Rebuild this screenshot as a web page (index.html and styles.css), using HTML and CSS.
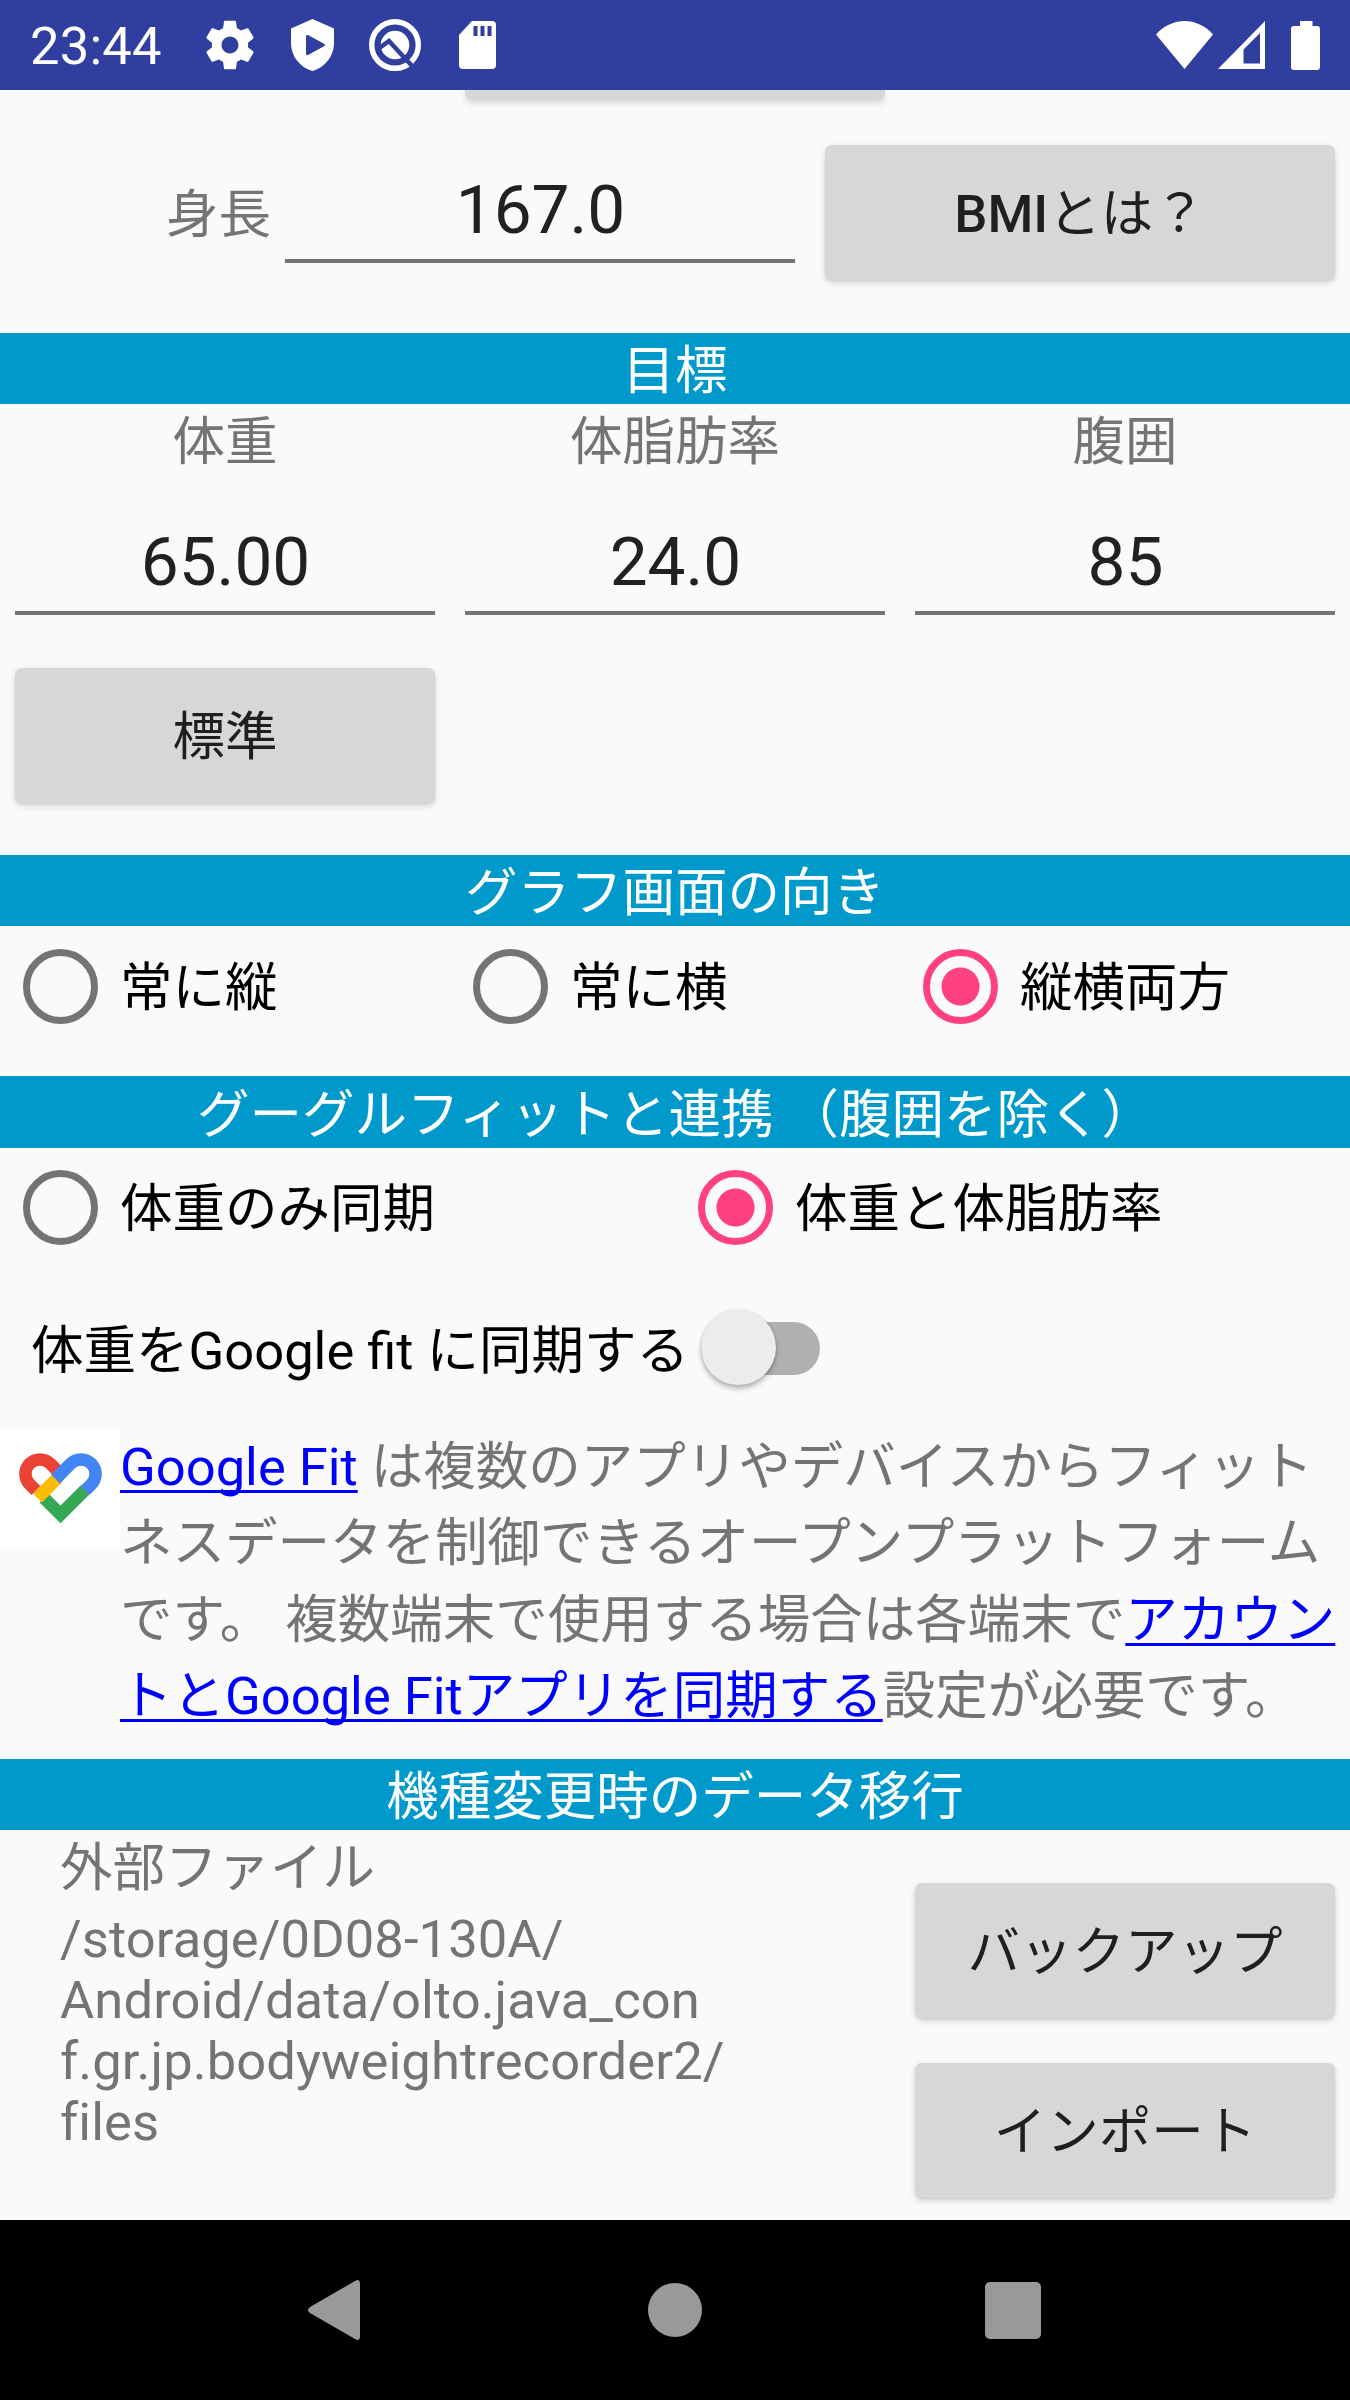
FILE: index.html
```
<!DOCTYPE html>
<html lang="ja">
  <head>
    <meta charset="utf-8">
    <title>設定</title>
    <link rel="stylesheet" href="styles.css">
  </head>
  <body>
    <div id="statusbar">
      <span class="clock">23:44</span>
      <svg class="gear" viewBox="0 0 24 24"><path d="M19.43 12.98c.04-.32.07-.64.07-.98s-.03-.66-.07-.98l2.11-1.65c.19-.15.24-.42.12-.64l-2-3.46c-.12-.22-.39-.3-.61-.22l-2.49 1c-.52-.4-1.08-.73-1.69-.98l-.38-2.65C14.46 2.18 14.25 2 14 2h-4c-.25 0-.46.18-.49.42l-.38 2.65c-.61.25-1.17.59-1.69.98l-2.49-1c-.23-.09-.49 0-.61.22l-2 3.46c-.13.22-.07.49.12.64l2.11 1.65c-.04.32-.07.65-.07.98s.03.66.07.98l-2.11 1.65c-.19.15-.24.42-.12.64l2 3.46c.12.22.39.3.61.22l2.49-1c.52.4 1.08.73 1.69.98l.38 2.65c.03.24.24.42.49.42h4c.25 0 .46-.18.49-.42l.38-2.65c.61-.25 1.17-.59 1.69-.98l2.49 1c.23.09.49 0 .61-.22l2-3.46c.12-.22.07-.49-.12-.64l-2.11-1.65zM12 15.5c-1.93 0-3.5-1.57-3.5-3.5s1.57-3.5 3.5-3.5 3.5 1.57 3.5 3.5-1.57 3.5-3.5 3.5z"/></svg>
      <svg class="shield" viewBox="0 0 43 52"><path fill-rule="evenodd" d="M21.500 0L43 9.500V24C43 37 34 48.500 21.500 52C9 48.500 0 37 0 24V9.500ZM15 17V35Q15 36.500 17 36L33.500 27Q34.500 26 33.500 25L17 16Q15 15.500 15 17Z"/></svg>
      <svg class="quick" viewBox="0 0 52 52">
        <circle cx="26" cy="26" r="23.300" fill="none" stroke="#fff" stroke-width="5.400"/>
        <circle cx="26" cy="26" r="14.300"/>
        <path d="M9 30L20 22L44 48" fill="none" stroke="#303f9f" stroke-width="4.600"/>
      </svg>
      <svg class="sdcard" viewBox="0 0 37 48"><path d="M13 0H33Q37 0 37 4V44Q37 48 33 48H4Q0 48 0 44V14Z"/><path fill="#303f9f" d="M14.500 5h4v10h-4zM21.500 5h4v10h-4zM28.500 5h4v10h-4z"/></svg>
      <div class="right">
        <svg class="wifi" viewBox="0 0 57 48"><path d="M0 13.500C16 -4.500 41 -4.500 57 13.500L28.500 48Z"/></svg>
        <svg class="signal" viewBox="0 0 47 48"><path fill-rule="evenodd" d="M47 0V48H0ZM42 12L25.500 28.500V42.500H42Z"/></svg>
        <svg class="battery" viewBox="0 0 29 49"><path d="M9 0H21.500V5H26Q29 5 29 8V46Q29 49 26 49H3Q0 49 0 46V8Q0 5 3 5H9Z"/></svg>
      </div>
    </div>

    <div id="content">
      <div class="peek"></div>
      <div class="height-row">
        <label>身長</label>
        <div class="field">167.0</div>
        <button><b>BMI</b>とは？</button>
      </div>

      <h2>目標</h2>
      <div class="grid">
        <div class="label">体重</div>
        <div class="label">体脂肪率</div>
        <div class="label">腹囲</div>
        <div class="field">65.00</div>
        <div class="field">24.0</div>
        <div class="field">85</div>
        <button>標準</button>
      </div>

      <h2>グラフ画面の向き</h2>
      <div class="radios">
        <div class="radio"><i></i><span>常に縦</span></div>
        <div class="radio"><i></i><span>常に横</span></div>
        <div class="radio on"><i></i><span>縦横両方</span></div>
      </div>

      <h2 class="tall">グーグルフィットと連携 （腹囲を除く）</h2>
      <div class="radios fit">
        <div class="radio"><i></i><span>体重のみ同期</span></div>
        <div class="radio on"><i></i><span>体重と体脂肪率</span></div>
      </div>
      <div class="sync">
        <span>体重をGoogle fit に同期する</span>
        <div class="switch"></div>
      </div>
      <div class="about">
        <svg class="heart" viewBox="0 0 120 120" fill="none" stroke-width="12.500">
          <path stroke="#34a853" d="M44 69L60.500 85.500L85 61"/>
          <path stroke="#ea4335" d="M36 61.500L29.700 55.300A14.500 14.500 0 0 1 50.300 34.700L57 41.500"/>
          <path stroke="#fbbc04" d="M37.500 69L58.500 48"/>
          <path stroke="#4285f4" d="M55.500 50L70.700 34.700A14.500 14.500 0 0 1 91.300 55.300L85 61.500"/>
        </svg>
        <p><a href="#">Google Fit</a> は複数のアプリやデバイスからフィット<br>ネスデータを制御できるオープンプラットフォーム<br>です。 複数端末で使用する場合は各端末で<a href="#">アカウン<br>トとGoogle Fitアプリを同期する</a>設定が必要です。</p>
      </div>

      <h2>機種変更時のデータ移行</h2>
      <div class="transfer">
        <div class="files">
          <div class="label">外部ファイル</div>
          <p>/storage/0D08-130A/<br>Android/data/olto.java_con<br>f.gr.jp.bodyweightrecorder2/<br>files</p>
        </div>
        <div class="buttons">
          <button>バックアップ</button>
          <button>インポート</button>
        </div>
      </div>
    </div>

    <div id="navbar">
      <svg class="back" viewBox="0 0 52 60"><path d="M47 1Q52 -2 52 4V56Q52 62 47 59L2 33Q-2 30 2 27Z"/></svg>
      <svg class="home" viewBox="0 0 54 54"><circle cx="27" cy="27" r="27"/></svg>
      <svg class="recent" viewBox="0 0 56 57"><rect width="56" height="57" rx="5"/></svg>
    </div>
  </body>
</html>
```

FILE: styles.css
```
* {
  margin: 0;
  padding: 0;
  box-sizing: border-box;
}
body {
  width: 1350px;
  height: 2400px;
  overflow: hidden;
  background: #fafafa;
  color: #747474;
  font-family: Roboto, "Noto Sans CJK JP", sans-serif;
  font-size: 52.5px;
  line-height: 64px;
  white-space: nowrap;
}
svg {
  display: block;
  flex: none;
}

#statusbar {
  display: flex;
  align-items: center;
  height: 90px;
  padding: 0 30px;
  background: #303f9f;
  color: #fff;
  fill: #fff;
}
#statusbar .clock {
  width: 171px;
  padding-top: 2px;
  letter-spacing: 0.2px;
}
.gear {
  width: 58px;
  height: 58px;
}
.shield {
  width: 43px;
  height: 52px;
  margin-left: 32px;
}
.quick {
  width: 52px;
  height: 52px;
  margin-left: 35px;
}
.sdcard {
  width: 37px;
  height: 48px;
  margin-left: 38px;
}
#statusbar .right {
  display: flex;
  margin-left: auto;
}
.wifi {
  width: 57px;
  height: 48px;
}
.signal {
  width: 47px;
  height: 48px;
  margin-left: 5px;
}
.battery {
  width: 29px;
  height: 49px;
  margin-left: 26px;
}

#content {
  height: 2130px;
  overflow: hidden;
}
h2 {
  height: 71px;
  padding-top: 6px;
  background: #0099cc;
  color: #fff;
  font-size: 52.5px;
  font-weight: 400;
  text-align: center;
}
h2.tall {
  height: 72px;
  padding: 7px 0 0 1px;
}
button {
  display: block;
  height: 135px;
  padding-top: 3px;
  border: 0;
  border-radius: 7px;
  background: #d6d7d7;
  box-shadow: 0 3px 7px rgba(0,0,0,0.15), 0 1px 2px rgba(0,0,0,0.08);
  color: #1f1f1f;
  font: inherit;
}
button b {
  font-weight: 500;
}
.field {
  height: 93px;
  padding-left: 1px;
  border-bottom: 4px solid #747474;
  color: #212121;
  font-size: 67.5px;
  line-height: 80px;
  text-align: center;
}
.label {
  height: 71px;
  padding-top: 6px;
}

.peek {
  width: 420px;
  height: 10px;
  margin-left: 465px;
  border-radius: 0 0 7px 7px;
  background: #d6d7d7;
  box-shadow: 0 3px 7px rgba(0,0,0,0.15);
}
.height-row {
  display: flex;
  height: 233px;
  padding: 45px 15px 0 166px;
}
.height-row label {
  width: 119px;
  padding-top: 38px;
}
.height-row .field {
  width: 510px;
  margin: 25px 30px 0 0;
}
.height-row button {
  width: 510px;
}

.grid {
  display: grid;
  grid-template-columns: repeat(3, 420px);
  column-gap: 30px;
  align-content: start;
  height: 451px;
  padding: 0 15px;
  text-align: center;
}
.grid .field {
  margin-top: 47px;
}
.grid button {
  margin-top: 53px;
}

.radios {
  display: grid;
  grid-template-columns: repeat(3, 450px);
  align-items: center;
  height: 150px;
  padding-bottom: 29px;
  color: #000;
}
.radios.fit {
  grid-template-columns: repeat(2, 675px);
  height: 119px;
  padding-bottom: 0;
}
.radio {
  display: flex;
  align-items: center;
  padding-left: 23px;
}
.radio i {
  width: 75px;
  height: 75px;
  margin-right: 22px;
  border: 7.5px solid #747474;
  border-radius: 50%;
}
.radio.on i {
  border-color: #ff4081;
  background: radial-gradient(circle, #ff4081 18.5px, transparent 19.5px);
}
.radio span {
  padding-top: 2px;
}

.sync {
  display: flex;
  align-items: center;
  height: 162px;
  padding-left: 31px;
  color: #000;
}
.sync span {
  width: 670px;
  padding-top: 6px;
}
.switch {
  position: relative;
  width: 119px;
  height: 53px;
  border-radius: 27px;
  background: #b0b0b0;
}
.switch::before {
  content: "";
  position: absolute;
  left: 0;
  top: -12px;
  width: 75px;
  height: 75px;
  border-radius: 50%;
  background: #ececec;
  box-shadow: 0 4px 5px rgba(0,0,0,0.25), 0 0 3px rgba(0,0,0,0.15);
}

.about {
  display: flex;
  align-items: flex-start;
  height: 330px;
}
.heart {
  width: 120px;
  height: 120px;
  background: #fff;
}
.about p {
  line-height: 76.3px;
}
.about a {
  color: #0000ff;
  text-decoration-thickness: 3px;
  text-underline-offset: 5px;
  text-decoration-skip-ink: none;
}

.transfer {
  display: flex;
  justify-content: space-between;
  height: 390px;
  padding: 0 15px 0 60px;
}
.files p {
  margin-top: 8px;
  line-height: 61px;
  letter-spacing: 0.1px;
}
.buttons {
  display: grid;
  gap: 45px;
  align-content: start;
  width: 420px;
  padding-top: 53px;
}

#navbar {
  display: flex;
  align-items: center;
  height: 180px;
  padding-left: 308px;
  background: #000;
  fill: #999;
}
.back {
  width: 52px;
  height: 60px;
}
.home {
  width: 54px;
  height: 54px;
  margin-left: 288px;
}
.recent {
  width: 56px;
  height: 57px;
  margin-left: 283px;
}
```
